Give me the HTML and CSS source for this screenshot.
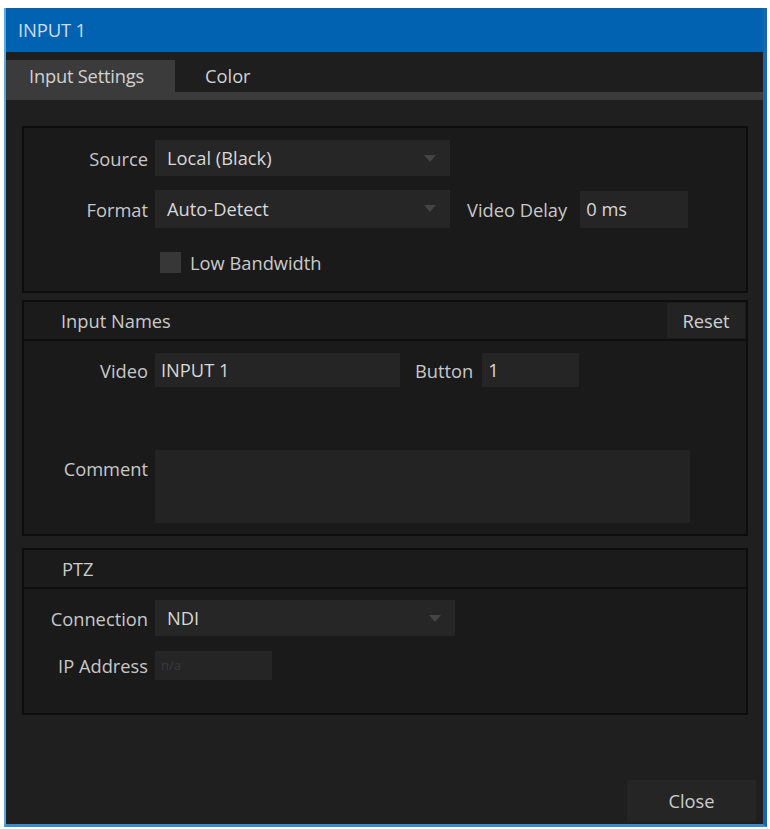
FILE: index.html
```html
<!DOCTYPE html>
<html>
<head>
<meta charset="utf-8">
<link rel="stylesheet" href="styles.css">
</head>
<body>
<div class="window">
  <div class="titlebar">INPUT 1</div>
  <div class="tabbar">
    <div class="tabs">
      <div class="tab active">Input Settings</div>
      <div class="tab">Color</div>
    </div>
    <div class="tabstrip"></div>
  </div>
  <div class="content">
    <div class="panel p1">
      <div class="row r-source">
        <div class="label">Source</div>
        <div class="select w295">Local (Black)<span class="arrow"></span></div>
      </div>
      <div class="row r-format">
        <div class="label">Format</div>
        <div class="select w295">Auto-Detect<span class="arrow"></span></div>
        <div class="label2 vd">Video Delay</div>
        <div class="field w108">0 ms</div>
      </div>
      <div class="row r-check">
        <div class="label"></div>
        <div class="check"></div>
        <div class="checklabel">Low Bandwidth</div>
      </div>
    </div>

    <div class="panel p2">
      <div class="phead">
        <div class="ptitle">Input Names</div>
        <div class="reset">Reset</div>
      </div>
      <div class="pbody b2">
        <div class="row r-video">
          <div class="label">Video</div>
          <div class="field w245">INPUT 1</div>
          <div class="label2 bt">Button</div>
          <div class="field w97">1</div>
        </div>
        <div class="row r-comment">
          <div class="label top">Comment</div>
          <div class="textarea"></div>
        </div>
      </div>
    </div>

    <div class="panel p3">
      <div class="phead">
        <div class="ptitle">PTZ</div>
      </div>
      <div class="pbody b3">
        <div class="row r-conn">
          <div class="label">Connection</div>
          <div class="select w300">NDI<span class="arrow"></span></div>
        </div>
        <div class="row r-ip">
          <div class="label">IP Address</div>
          <div class="field w117 dim">n/a</div>
        </div>
      </div>
    </div>

    <div class="spacer"></div>
    <div class="footer">
      <div class="close">Close</div>
    </div>
  </div>
</div>
</body>
</html>
```

FILE: styles.css
```css
* { box-sizing: border-box; }
html, body { margin: 0; padding: 0; background: #ffffff; }
body {
  font-family: "Open Sans", "Noto Sans", sans-serif;
  font-size: 18.3px;
  color: #c8c8c8;
}
.window {
  margin: 8px 0 0 4px;
  width: 763px;
  height: 819px;
  display: flex;
  flex-direction: column;
  background: #1e1e1e;
  border-left: 2px solid #5ea6de;
  border-right: 4px solid #1667ab;
  border-bottom: 3px solid #3b8ccc;
}
.titlebar {
  height: 44px;
  background: #0062b1;
  color: #cfdcef;
  font-size: 18.5px;
  letter-spacing: -0.2px;
  padding-left: 12px;
  line-height: 44px;
  flex: none;
}
.tabbar {
  flex: none;
  height: 48px;
  background: #1e1e1e;
  display: flex;
  flex-direction: column;
  justify-content: flex-end;
}
.tabs { display: flex; height: 32px; }
.tab {
  height: 32px;
  line-height: 32px;
  padding: 0 30px;
  color: #d2d2d2;
}
.tab.active {
  background: #3b3b3b;
  width: 169px;
  padding-left: 23px;
  letter-spacing: -0.2px;
}
.tabstrip { height: 8px; background: #3b3b3b; }

.content {
  flex: 1;
  display: flex;
  flex-direction: column;
  padding: 26px 0 0 16px;
  background: #1f1f1f;
}
.panel {
  width: 726px;
  background: #1a1a1a;
  border: 2px solid #0d0d0d;
  flex: none;
}
.p1 { height: 167px; padding-top: 12px; }
.p2 { height: 236px; margin-top: 7px; }
.p3 { height: 167px; margin-top: 12px; }

.row { display: flex; align-items: center; }
.label {
  width: 124px;
  margin-right: 7px;
  text-align: right;
  color: #c8c8c8;
  flex: none;
}
.label.top { align-self: flex-start; margin-top: 6px; }
.label2 { color: #c8c8c8; flex: none; }
.vd { margin-left: 17px; margin-right: 13px; }
.bt { margin-left: 15px; margin-right: 9px; }

.select, .field {
  position: relative;
  height: 36px;
  line-height: 36px;
  padding-left: 12px;
  background: #262626;
  color: #d8d8d8;
  flex: none;
}
.field { background: #252525; padding-left: 6px; }
.w295 { width: 295px; }
.w300 { width: 300px; }
.w108 { width: 108px; height: 37px; }
.w245 { width: 245px; height: 34px; line-height: 34px; }
.w97 { width: 97px; height: 34px; line-height: 34px; }
.w117 { width: 117px; height: 29px; line-height: 29px; }
.dim { color: #3a3a3a; font-size: 13px; }
.arrow {
  position: absolute;
  right: 14px;
  top: 15px;
  width: 0; height: 0;
  border-left: 6px solid transparent;
  border-right: 6px solid transparent;
  border-top: 7px solid #444444;
}
.r-format { margin-top: 14px; }
.r-format .select { height: 38px; line-height: 38px; }
.r-check { margin-top: 22px; }
.check {
  width: 21px; height: 21px;
  background: #373737;
  margin-left: 5px;
  flex: none;
}
.checklabel { margin-left: 9px; color: #cacaca; }

.phead {
  height: 39px;
  display: flex;
  align-items: center;
  justify-content: space-between;
  border-bottom: 2px solid #0e0e0e;
  background: #1b1b1b;
}
.ptitle { padding-left: 37px; color: #cacaca; }
.p3 .ptitle { padding-left: 38px; }
.reset {
  width: 78px;
  height: 35px;
  line-height: 35px;
  text-align: center;
  background: #232323;
  color: #d0d0d0;
  margin-right: 1px;
}
.b2 { padding-top: 12px; }
.r-comment { margin-top: 63px; }
.textarea { width: 535px; height: 73px; background: #232323; flex: none; }
.b3 { padding-top: 11px; }
.r-ip { margin-top: 15px; }

.spacer { flex: 1; }
.footer {
  display: flex;
  justify-content: flex-end;
  padding-right: 7px;
  padding-bottom: 2px;
}
.close {
  width: 129px;
  height: 42px;
  line-height: 42px;
  text-align: center;
  background: #252525;
  color: #cccccc;
}
```
